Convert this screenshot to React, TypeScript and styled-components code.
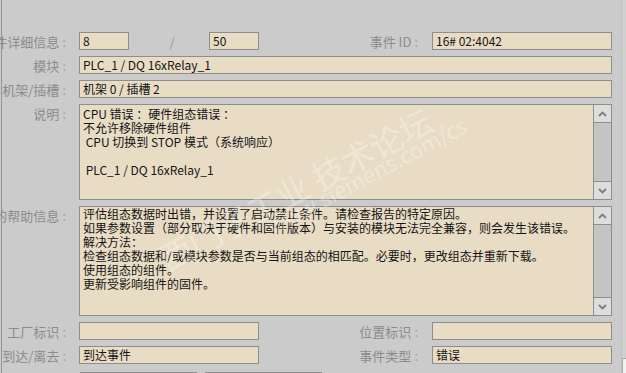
import styled, { createGlobalStyle } from "styled-components";

const GlobalStyle = createGlobalStyle`
  html, body {
    margin: 0;
    padding: 0;
    background: #cbcbcb;
    overflow: hidden;
  }
  body {
    font-family: "Noto Sans CJK SC", "Noto Sans", sans-serif;
  }
`;

const Page = styled.div`
  position: relative;
  display: flex;
  width: 625px;
  height: 373px;
  margin-left: 1px;
  border-left: 1px solid #959595;
  box-sizing: border-box;
`;

const Form = styled.div`
  flex: 1;
  padding-top: 32px;
`;

const Grid = styled.div`
  display: grid;
  grid-template-columns: 77px 180px 173px 180px;
  grid-template-rows: 18px 18px 18px 96px 110px 18px 18px;
  row-gap: 6px;
`;

const Label = styled.div<{ $pad?: number; $top?: boolean }>`
  display: flex;
  justify-content: flex-end;
  align-items: center;
  align-self: ${(p) => (p.$top ? "start" : "stretch")};
  height: 18px;
  min-width: 0;
  padding-right: ${(p) => p.$pad ?? 13}px;
  font-size: 13px;
  color: #8c8c8c;
  white-space: nowrap;

  span {
    flex-shrink: 0;
  }
`;

const Colon = styled.span`
  margin-left: 3px;
  color: #a4a4a4;
`;

const Field = styled.div<{ $span?: number; $w?: number }>`
  grid-column: span ${(p) => p.$span ?? 1};
  ${(p) => (p.$w ? `width: ${p.$w}px;` : "")}
  height: 18px;
  box-sizing: border-box;
  border: 1px solid #8e8e8e;
  background: #e9dcc5;
  padding: 0 3px;
  font-size: 12px;
  line-height: 16px;
  color: #141414;
  white-space: nowrap;
  overflow: hidden;
`;

const Pair = styled.div`
  display: flex;
  align-items: center;
`;

const Slash = styled.div`
  flex: 1;
  text-align: center;
  padding-left: 6px;
  font-size: 13px;
  color: #9a9a9a;
`;

const TextBox = styled.div`
  grid-column: span 3;
  display: flex;
  box-sizing: border-box;
  border: 1px solid #8e8e8e;
  background: #e9dcc5;
  overflow: hidden;
`;

const TextContent = styled.div<{ $top: number }>`
  flex: 1;
  padding: ${(p) => p.$top}px 3px 0;
  font-size: 12px;
  line-height: 14px;
  color: #141414;
  white-space: pre;
  overflow: hidden;
`;

const ScrollBar = styled.div`
  display: flex;
  flex-direction: column;
  justify-content: space-between;
  width: 18px;
  background: #c4c4c4;
  border-left: 1px solid #8e8e8e;
  box-sizing: border-box;
`;

const ArrowButton = styled.div`
  display: flex;
  align-items: center;
  justify-content: center;
  height: 18px;
  box-sizing: border-box;
  background: #dddddd;
  border-top: 1px solid #8e8e8e;
  border-bottom: 1px solid #8e8e8e;

  &:first-child {
    border-top: none;
  }
  &:last-child {
    border-bottom: none;
  }
`;

const BottomBar = styled.div`
  display: flex;
  gap: 8px;
  margin-top: 8px;
  padding-left: 78px;
`;

/* only the top edge of the buttons below is inside the frame */
const ButtonStub = styled.div<{ $w: number }>`
  width: ${(p) => p.$w}px;
  height: 1px;
  border-top: 1px solid #8e8e8e;
  background: #d6d6d6;
`;

const RightEdge = styled.div`
  display: flex;
  flex-direction: column;
  justify-content: flex-end;
  width: 4px;
  border-left: 1px solid #c0c0c0;
  background: #cfcfcf;
`;

const CornerBox = styled.div`
  height: 14px;
  border-top: 1px solid #a8a8a8;
  border-left: 1px solid #a8a8a8;
  background: #f2f2f2;
`;

const Watermark = styled.div`
  position: absolute;
  left: 150px;
  top: 243px;
  transform: rotate(-28deg);
  transform-origin: 0 0;
  color: rgba(255, 255, 255, 0.32);
  pointer-events: none;
  white-space: nowrap;
`;

const MarkLine = styled.div<{ $size: number; $indent: number; $lift?: number }>`
  font-size: ${(p) => p.$size}px;
  line-height: ${(p) => p.$size + 6}px;
  padding-left: ${(p) => p.$indent}px;
  margin-top: ${(p) => -(p.$lift ?? 0)}px;
  font-family: "Noto Sans CJK SC", "Noto Sans", sans-serif;
`;

const Chevron = ({ up }: { up?: boolean }) => (
  <svg width="9" height="6" viewBox="0 0 9 6">
    <polyline
      points={up ? "1,5 4.5,1.5 8,5" : "1,1 4.5,4.5 8,1"}
      fill="none"
      stroke="#7d7d7d"
      strokeWidth="1.8"
    />
  </svg>
);

const FieldLabel = ({ text, pad, top }: { text: string; pad?: number; top?: boolean }) => (
  <Label $pad={pad} $top={top}>
    <span>{text}</span>
    <Colon>:</Colon>
  </Label>
);

const ScrollText = ({ lines, top }: { lines: string[]; top: number }) => (
  <TextBox>
    <TextContent $top={top}>{lines.join("\n")}</TextContent>
    <ScrollBar>
      <ArrowButton>
        <Chevron up />
      </ArrowButton>
      <ArrowButton>
        <Chevron />
      </ArrowButton>
    </ScrollBar>
  </TextBox>
);

const description = [
  "CPU 错误 ：硬件组态错误 ：",
  "不允许移除硬件组件",
  " CPU 切换到 STOP 模式（系统响应）",
  "",
  " PLC_1 / DQ 16xRelay_1",
];

const helpText = [
  "评估组态数据时出错，并设置了启动禁止条件。请检查报告的特定原因。",
  "如果参数设置（部分取决于硬件和固件版本）与安装的模块无法完全兼容，则会发生该错误。",
  "解决方法：",
  "检查组态数据和/或模块参数是否与当前组态的相匹配。必要时，更改组态并重新下载。",
  "使用组态的组件。",
  "更新受影响组件的固件。",
];

export default function App() {
  return (
    <>
      <GlobalStyle />
      <Page>
        <Form>
          <Grid>
            <FieldLabel text="事件详细信息" />
            <Pair>
              <Field $w={50}>8</Field>
              <Slash>/</Slash>
              <Field $w={50}>50</Field>
            </Pair>
            <FieldLabel text="事件 ID" pad={14} />
            <Field>16# 02:4042</Field>

            <FieldLabel text="模块" />
            <Field $span={3}>PLC_1 / DQ 16xRelay_1</Field>

            <FieldLabel text="机架/插槽" />
            <Field $span={3}>机架 0 / 插槽 2</Field>

            <FieldLabel text="说明" top />
            <ScrollText lines={description} top={2} />

            <FieldLabel text="故障的帮助信息" top />
            <ScrollText lines={helpText} top={0} />

            <FieldLabel text="工厂标识" />
            <Field></Field>
            <FieldLabel text="位置标识" pad={14} />
            <Field></Field>

            <FieldLabel text="到达/离去" />
            <Field>到达事件</Field>
            <FieldLabel text="事件类型" pad={14} />
            <Field>错误</Field>
          </Grid>
          <BottomBar>
            <ButtonStub $w={117} />
            <ButtonStub $w={117} />
          </BottomBar>
        </Form>
        <RightEdge>
          <CornerBox />
        </RightEdge>
        <Watermark>
          <MarkLine $size={33} $indent={0}>西门子工业 技术论坛</MarkLine>
          <MarkLine $size={22} $indent={110} $lift={13}>www.siemens.com/cs</MarkLine>
        </Watermark>
      </Page>
    </>
  );
}
